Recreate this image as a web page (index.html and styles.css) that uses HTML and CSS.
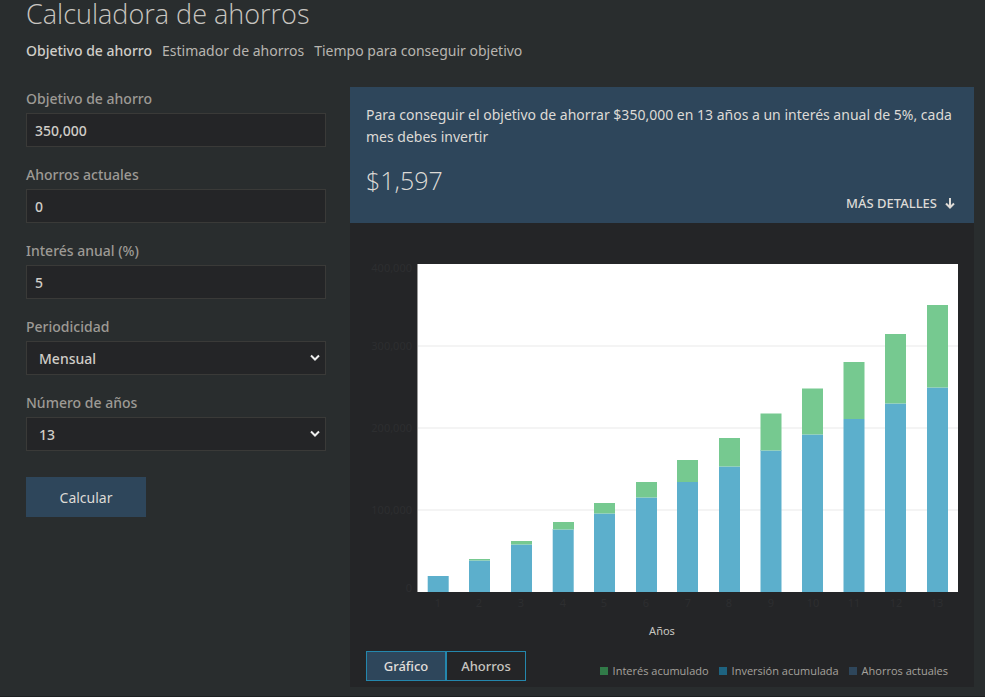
FILE: index.html
```html
<!DOCTYPE html>
<html lang="es">
<head>
<meta charset="utf-8">
<meta name="viewport" content="width=device-width, initial-scale=1">
<title>Calculadora de ahorros</title>
<link rel="stylesheet" href="styles.css">
</head>
<body>
<main class="page">
  <h1 class="title">Calculadora de ahorros</h1>
  <nav class="tabs">
    <a class="tab tab-active" href="#objetivo">Objetivo de ahorro</a>
    <a class="tab" href="#estimador">Estimador de ahorros</a>
    <a class="tab" href="#tiempo">Tiempo para conseguir objetivo</a>
  </nav>
  <div class="columns">
    <form class="form">
      <div class="field">
        <label for="goal">Objetivo de ahorro</label>
        <input class="control" id="goal" type="text" value="350,000">
      </div>
      <div class="field">
        <label for="current">Ahorros actuales</label>
        <input class="control" id="current" type="text" value="0">
      </div>
      <div class="field">
        <label for="rate">Interés anual (%)</label>
        <input class="control" id="rate" type="text" value="5">
      </div>
      <div class="field">
        <label for="period">Periodicidad</label>
        <div class="select-wrap">
          <select class="control select" id="period"><option>Mensual</option></select>
          <svg class="chevron" viewBox="0 0 10 8" aria-hidden="true"><path d="M1 1.5 5 5.5 9 1.5"/></svg>
        </div>
      </div>
      <div class="field">
        <label for="years">Número de años</label>
        <div class="select-wrap">
          <select class="control select" id="years"><option>13</option></select>
          <svg class="chevron" viewBox="0 0 10 8" aria-hidden="true"><path d="M1 1.5 5 5.5 9 1.5"/></svg>
        </div>
      </div>
      <button class="submit" type="button">Calcular</button>
    </form>
    <section class="panel">
      <div class="summary">
        <p class="summary-text">Para conseguir el objetivo de ahorrar $350,000 en 13 años a un interés anual de 5%, cada mes debes invertir</p>
        <p class="amount">$1,597</p>
        <button class="details" type="button">MÁS DETALLES
          <svg class="arrow" viewBox="0 0 10 12" aria-hidden="true"><path d="M5 1v9M1 6.500l4 4 4-4"/></svg>
        </button>
      </div>
      <svg class="chart" viewBox="0 0 624 394" role="img" aria-label="Ahorros por año">
        <rect class="plot" x="67" y="41" width="541" height="328"/>
        <path class="grid" d="M67 123H608M67 205H608M67 287H608"/>
        <path class="axis" d="M67.500 41V369"/>
        <g class="green">
          <rect x="119" y="336" width="21" height="2"/>
          <rect x="161" y="318" width="21" height="4"/>
          <rect x="203" y="299" width="21" height="8"/>
          <rect x="244" y="280" width="21" height="11"/>
          <rect x="286" y="259" width="21" height="16"/>
          <rect x="327" y="237" width="21" height="22"/>
          <rect x="369" y="215" width="21" height="29"/>
          <rect x="410.500" y="190.500" width="21" height="37"/>
          <rect x="452" y="165.500" width="21" height="46"/>
          <rect x="493.500" y="139" width="21" height="57"/>
          <rect x="535" y="111" width="21" height="70"/>
          <rect x="577" y="82" width="21" height="83"/>
        </g>
        <g class="blue">
          <rect x="77.700" y="353" width="21" height="16"/>
          <rect x="119" y="337" width="21" height="32"/>
          <rect x="161" y="321" width="21" height="48"/>
          <rect x="202.700" y="306" width="21" height="63"/>
          <rect x="244" y="290" width="21" height="79"/>
          <rect x="286" y="274" width="21" height="95"/>
          <rect x="327" y="259" width="21" height="110"/>
          <rect x="369" y="243" width="21" height="126"/>
          <rect x="410.500" y="227" width="21" height="142"/>
          <rect x="452" y="211" width="21" height="158"/>
          <rect x="493.500" y="196" width="21" height="173"/>
          <rect x="535" y="180" width="21" height="189"/>
          <rect x="577" y="164" width="21" height="205"/>
        </g>
        <path class="seam" d="M119 337.500h21M161 321.500h21M203 306.500h21M244 290.500h21M286 274.500h21M369 243.500h21M411 227.500h20M452 211.500h21M535 180.500h21M577 164.500h21"/>
        <g class="ylabels">
          <text x="62" y="49">400,000</text>
          <text x="62" y="127">300,000</text>
          <text x="62" y="209">200,000</text>
          <text x="62" y="291">100,000</text>
          <text x="62" y="369">0</text>
        </g>
        <g class="xlabels">
          <text x="88" y="384">1</text>
          <text x="129" y="384">2</text>
          <text x="171" y="384">3</text>
          <text x="213" y="384">4</text>
          <text x="254" y="384">5</text>
          <text x="296" y="384">6</text>
          <text x="338" y="384">7</text>
          <text x="379" y="384">8</text>
          <text x="421" y="384">9</text>
          <text x="463" y="384">10</text>
          <text x="504" y="384">11</text>
          <text x="546" y="384">12</text>
          <text x="587" y="384">13</text>
        </g>
      </svg>
      <p class="axis-title">Años</p>
      <div class="panel-foot">
        <div class="switch">
          <button class="switch-btn switch-on" type="button">Gráfico</button>
          <button class="switch-btn" type="button">Ahorros</button>
        </div>
        <ul class="legend">
          <li><span class="swatch swatch-interest"></span>Interés acumulado</li>
          <li><span class="swatch swatch-invested"></span>Inversión acumulada</li>
          <li><span class="swatch swatch-current"></span>Ahorros actuales</li>
        </ul>
      </div>
    </section>
  </div>
</main>
</body>
</html>
```
FILE: styles.css
```css
* { box-sizing: border-box; }

body {
  margin: 0;
  background: #292d2e;
  color: #c8c5c0;
  font-family: "Noto Sans", "Open Sans", sans-serif;
  font-size: 14px;
}

h1, p, ul { margin: 0; padding: 0; }

button, input, select { font: inherit; color: inherit; margin: 0; }

.page {
  padding: 0 11px 9px 26px;
  border-bottom: 1px solid #1d2021;
}

.title {
  font-family: "Open Sans", "Noto Sans", sans-serif;
  font-size: 27px;
  font-weight: 300;
  line-height: 28px;
}

.tabs {
  display: flex;
  gap: 10px;
  padding: 12px 0 26px;
  line-height: 21px;
}

.tab { color: #b8b5b0; text-decoration: none; white-space: nowrap; }
.tab-active { color: #d0cdc8; font-weight: 500; }

.columns {
  display: grid;
  grid-template-columns: 300px minmax(0, 1fr);
  gap: 24px;
  align-items: start;
}

.form { display: grid; gap: 8px; }

.field label {
  display: block;
  height: 26px;
  line-height: 24px;
  color: #9d9a95;
  font-weight: 500;
}

.field { padding-bottom: 8px; }

.control {
  display: block;
  width: 100%;
  height: 34px;
  padding: 0 8px;
  border: 1px solid #3a3a38;
  border-radius: 0;
  background: #242527;
  color: #d0cdc8;
  font-weight: 500;
}

.select { appearance: none; padding: 0 12px; }
.select-wrap { position: relative; }

.chevron {
  position: absolute;
  top: 13px;
  right: 6px;
  width: 10px;
  height: 8px;
  fill: none;
  stroke: #eeeeee;
  stroke-width: 2;
  pointer-events: none;
}

.submit {
  width: 120px;
  height: 40px;
  margin-top: 10px;
  border: 0;
  background: #2e465b;
  color: #dddad6;
}

.panel { background: #242527; }

.summary {
  display: flex;
  flex-direction: column;
  min-height: 136px;
  padding: 17px 16px 11px;
  background: #2e465b;
  color: #dddad6;
}

.summary-text { line-height: 22px; }

.amount {
  margin-top: 18px;
  font-family: "Open Sans", "Noto Sans", sans-serif;
  font-size: 25px;
  font-weight: 300;
  line-height: 28px;
}

.details {
  display: flex;
  align-items: center;
  align-self: flex-end;
  gap: 8px;
  height: 18px;
  padding: 0 3px;
  border: 0;
  background: none;
  font-size: 13px;
  font-weight: 500;
  line-height: 18px;
}

.arrow {
  width: 10px;
  height: 12px;
  fill: none;
  stroke: currentColor;
  stroke-width: 2;
}

.chart { display: block; width: 100%; height: auto; font-size: 11px; }
.plot { fill: #ffffff; }
.grid { fill: none; stroke: #f4f4f4; stroke-width: 2; }
.axis { stroke: #999999; }
.green { fill: #76c990; }
.blue { fill: #5cafcc; }
.seam { fill: none; stroke: #93d0bd; }
.ylabels, .xlabels { fill: #2d2e30; }
.ylabels { text-anchor: end; }
.xlabels { text-anchor: middle; }

.axis-title {
  padding: 4px 0 10px;
  font-size: 11px;
  line-height: 20px;
  text-align: center;
}

.panel-foot {
  display: flex;
  justify-content: space-between;
  padding: 0 26px 6px 16px;
}

.switch { display: flex; }

.switch-btn {
  width: 80px;
  height: 30px;
  padding: 0;
  border: 1px solid #2487ad;
  background: none;
  font-size: 13px;
  font-weight: 500;
}

.switch-on { background: #2e465b; color: #e2dfda; }

.legend {
  display: flex;
  gap: 10px;
  padding-top: 10px;
  color: #a5a29d;
  font-family: "Open Sans", "Noto Sans", sans-serif;
  font-size: 11px;
  font-weight: 500;
  line-height: 20px;
  list-style: none;
}

.legend li { display: flex; align-items: center; gap: 5px; white-space: nowrap; }

.swatch { width: 8px; height: 8px; }
.swatch-interest { background: #317a48; }
.swatch-invested { background: #1e6380; }
.swatch-current { background: #2e465b; }
```
